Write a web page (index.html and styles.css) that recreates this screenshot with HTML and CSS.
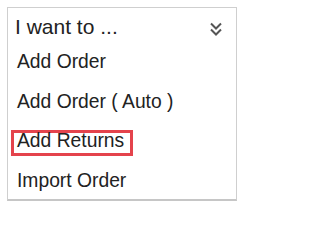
FILE: index.html
```html
<!DOCTYPE html>
<html>
<head>
<meta charset="utf-8">
<link rel="stylesheet" href="styles.css">
</head>
<body>
<div class="menu">
  <div class="menu-head">
    <span class="menu-title">I want to ...</span>
    <svg class="chev" width="12" height="14" viewBox="0 0 12 14">
      <polyline points="1,1.5 6,6.5 11,1.5" />
      <polyline points="1,7.5 6,12.5 11,7.5" />
    </svg>
  </div>
  <ul class="menu-list">
    <li class="menu-item"><span class="label">Add Order</span></li>
    <li class="menu-item"><span class="label">Add Order ( Auto )</span></li>
    <li class="menu-item"><span class="label mark">Add Returns</span></li>
    <li class="menu-item"><span class="label">Import Order</span></li>
  </ul>
</div>
</body>
</html>
```

FILE: styles.css
```css
html, body {
  margin: 0;
  padding: 0;
  background: #ffffff;
}
body {
  font-family: "Liberation Sans", Arial, sans-serif;
  color: #222222;
}
.menu {
  box-sizing: border-box;
  margin: 7px 0 0 7px;
  width: 230px;
  height: 194px;
  border: 1px solid #cfcfcf;
  border-bottom: 2px solid #c6c6c6;
}
.menu-head {
  display: flex;
  align-items: center;
  justify-content: space-between;
  padding: 6px 14px 0 7px;
  height: 26px;
}
.menu-title {
  font-size: 21px;
  line-height: 26px;
}
.chev {
  display: block;
  margin-top: 3px;
}
.chev polyline {
  fill: none;
  stroke: #555555;
  stroke-width: 2;
}
.menu-list {
  list-style: none;
  margin: 0;
  padding: 2px 0 0 9px;
}
.menu-item {
  font-size: 19.3px;
  line-height: 39.6px;
}
.mark {
  display: inline-block;
  margin-left: -6px;
  padding: 0 6px 5px 3px;
  line-height: 15px;
  border: 3px solid #e4434c;
}
```
